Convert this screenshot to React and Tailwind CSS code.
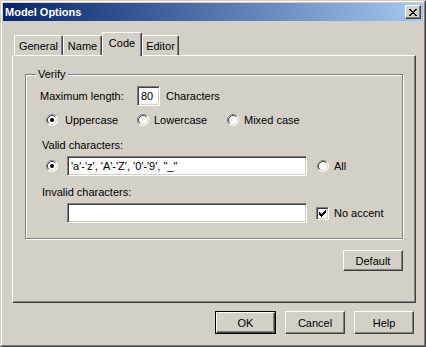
import React from "react";

const FONT = { fontFamily: '"Liberation Sans", Arial, sans-serif' };

const X_ROWS = ["11000011", "01100110", "00111100", "00011000", "00111100", "01100110", "11000011"];

function CloseButton() {
  return (
    <div className="w-[16px] h-[14px] bg-[#d4d0c8] border border-t-white border-l-white border-r-[#404040] border-b-[#404040] shadow-[inset_-1px_-1px_0_#808080] flex items-center justify-center">
      <svg width="8" height="7" viewBox="0 0 8 7" shapeRendering="crispEdges" className="ml-[-1px]">
        {X_ROWS.map((row, y) =>
          row.split("").map((c, x) => (c === "1" ? <rect key={`${x}-${y}`} x={x} y={y} width="1" height="1" fill="#000" /> : null))
        )}
      </svg>
    </div>
  );
}

function Radio({ checked }) {
  return (
    <svg width="12" height="12" viewBox="0 0 12 12" className="shrink-0">
      <circle cx="6" cy="6" r="5.5" fill="#fff" />
      <path d="M2.11 9.89 A5.5 5.5 0 0 1 9.89 2.11" fill="none" stroke="#808080" />
      <path d="M9.89 2.11 A5.5 5.5 0 0 1 2.11 9.89" fill="none" stroke="#fff" />
      <path d="M2.82 9.18 A4.5 4.5 0 0 1 9.18 2.82" fill="none" stroke="#404040" />
      <path d="M9.18 2.82 A4.5 4.5 0 0 1 2.82 9.18" fill="none" stroke="#d4d0c8" />
      {checked && <circle cx="6" cy="6" r="2" fill="#000" />}
    </svg>
  );
}

function Checkbox({ checked }) {
  return (
    <div className="w-[13px] h-[13px] shrink-0 bg-white border border-t-[#808080] border-l-[#808080] border-r-white border-b-white shadow-[inset_1px_1px_0_#404040,inset_-1px_-1px_0_#d4d0c8] flex items-center justify-center">
      {checked && (
        <svg width="7" height="7" viewBox="0 0 7 7" shapeRendering="crispEdges">
          <path d="M0 2h1v1h1v1h1v-1h1v-1h1v-1h1v-1h1v3h-1v1h-1v1h-1v1h-1v1h-1v-1h-1v-1h-1z" fill="#000" />
        </svg>
      )}
    </div>
  );
}

function Edit({ className = "", value = "" }) {
  return (
    <div className={`h-[20px] bg-white border border-t-[#808080] border-l-[#808080] border-r-white border-b-white shadow-[inset_1px_1px_0_#404040,inset_-1px_-1px_0_#d4d0c8] flex items-center pl-[3px] ${className}`}>
      {value}
    </div>
  );
}

function Button({ children, primary, className = "" }) {
  if (primary) {
    return (
      <div className={`border border-black ${className}`}>
        <div className="w-full h-full flex items-center justify-center border border-t-white border-l-white border-r-[#404040] border-b-[#404040] shadow-[inset_-1px_-1px_0_#808080]">
          {children}
        </div>
      </div>
    );
  }
  return (
    <div className={`flex items-center justify-center border border-t-white border-l-white border-r-[#404040] border-b-[#404040] shadow-[inset_-1px_-1px_0_#808080] ${className}`}>
      {children}
    </div>
  );
}

function Tab({ label, width, selected }) {
  return (
    <div
      className={`${width} ${selected ? "h-[24px] mb-[-1px] z-10 pb-[3px]" : "h-[20px]"} relative bg-[#d4d0c8] border-t border-l border-r border-t-white border-l-white border-r-[#404040] rounded-t-[2px] shadow-[inset_-1px_0_0_#808080] flex items-center justify-center`}
    >
      {label}
    </div>
  );
}

export default function App() {
  return (
    <div className="w-[426px] h-[347px] bg-[#d4d0c8] text-[11px] leading-[14px] text-black select-none" style={FONT}>
      <div className="w-full h-full border border-t-[#d4d0c8] border-l-[#d4d0c8] border-r-[#404040] border-b-[#404040]">
        <div className="w-full h-full border border-t-white border-l-white border-r-[#808080] border-b-[#808080] p-[1px] flex flex-col">
          {/* title bar */}
          <div className="h-[18px] bg-gradient-to-r from-[#0a246a] to-[#a6caf0] flex items-center justify-between pl-[2px] pr-[2px]">
            <span className="text-white font-bold text-[11px]">Model Options</span>
            <CloseButton />
          </div>

          {/* tabs + panel */}
          <div className="pl-[9px] pt-[11px] flex flex-col">
            <div className="flex items-end h-[23px] ml-[2px]">
              <Tab label="General" width="w-[49px]" />
              <Tab label="Name" width="w-[39px]" />
              <Tab label="Code" width="w-[40px]" selected />
              <Tab label="Editor" width="w-[37px]" />
            </div>

            <div className="w-[404px] h-[248px] border border-t-white border-l-white border-r-[#404040] border-b-[#404040] shadow-[inset_-1px_-1px_0_#808080]">
              <div className="w-[378px] ml-[12px] mt-[18px] flex flex-col items-end">
                {/* Verify group */}
                <div className="relative w-full h-[165px] border border-[#808080] shadow-[inset_1px_1px_0_#fff,1px_1px_0_#fff] pl-[14px]">
                  <span className="absolute left-[10px] top-[-8px] bg-[#d4d0c8] px-[2px]">Verify</span>

                  <div className="flex items-center h-[20px] mt-[11px]">
                    <span className="w-[97px]">Maximum length:</span>
                    <Edit className="w-[23px]" value="80" />
                    <span className="ml-[6px]">Characters</span>
                  </div>

                  <div className="flex items-center h-[14px] mt-[7px] pl-[6px]">
                    <div className="w-[91px] flex items-center gap-[7px]">
                      <Radio checked />
                      <span>Uppercase</span>
                    </div>
                    <div className="w-[90px] flex items-center gap-[5px]">
                      <Radio />
                      <span>Lowercase</span>
                    </div>
                    <div className="flex items-center gap-[5px]">
                      <Radio />
                      <span>Mixed case</span>
                    </div>
                  </div>

                  <div className="h-[14px] mt-[11px] pl-[2px] flex items-center">Valid characters:</div>

                  <div className="flex items-center h-[20px] mt-[4px] pl-[6px]">
                    <Radio checked />
                    <Edit className="w-[240px] ml-[9px]" value={"'a'-'z', 'A'-'Z', '0'-'9', \"_\""} />
                    <div className="ml-[10px] flex items-center gap-[5px]">
                      <Radio />
                      <span>All</span>
                    </div>
                  </div>

                  <div className="h-[14px] mt-[9px] pl-[2px] flex items-center">Invalid characters:</div>

                  <div className="flex items-center h-[20px] mt-[4px] pl-[27px]">
                    <Edit className="w-[240px]" />
                    <div className="ml-[9px] flex items-center gap-[5px]">
                      <Checkbox checked />
                      <span>No accent</span>
                    </div>
                  </div>
                </div>

                <Button className="w-[60px] h-[21px] mt-[11px]">Default</Button>
              </div>
            </div>
          </div>

          {/* bottom buttons */}
          <div className="flex justify-end gap-[9px] mt-[8px] pr-[9px]">
            <Button primary className="w-[61px] h-[23px]">OK</Button>
            <Button className="w-[60px] h-[23px]">Cancel</Button>
            <Button className="w-[60px] h-[23px]">Help</Button>
          </div>
        </div>
      </div>
    </div>
  );
}
